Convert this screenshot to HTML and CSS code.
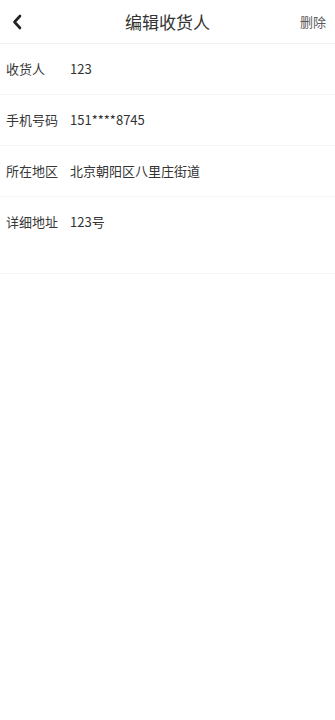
FILE: index.html
```html
<!DOCTYPE html>
<html lang="zh">
<head>
<meta charset="utf-8">
<link rel="stylesheet" href="styles.css">
</head>
<body>
<div class="page">
  <header class="nav">
    <div class="nav-left">
      <svg class="back" width="10" height="16" viewBox="0 0 10 16"><path d="M8 2 L2.5 8 L8 14" fill="none" stroke="#222" stroke-width="2.6" stroke-linecap="round" stroke-linejoin="round"/></svg>
    </div>
    <div class="nav-title">编辑收货人</div>
    <div class="nav-right">删除</div>
  </header>
  <div class="form">
    <div class="row"><span class="label">收货人</span><span class="value">123</span></div>
    <div class="row"><span class="label">手机号码</span><span class="value">151****8745</span></div>
    <div class="row"><span class="label">所在地区</span><span class="value">北京朝阳区八里庄街道</span></div>
    <div class="row row-tall"><span class="label">详细地址</span><span class="value">123号</span></div>
  </div>
</div>
</body>
</html>
```
FILE: styles.css
```css
* { box-sizing: border-box; }
html, body { margin: 0; padding: 0; background: #fff; }
body {
  font-family: "Noto Sans CJK SC", "Noto Sans", sans-serif;
  color: #333;
}
.page { width: 335px; min-height: 720px; background: #fff; }
.nav {
  height: 44px;
  display: grid;
  grid-template-columns: 1fr auto 1fr;
  align-items: center;
  border-bottom: 1px solid #f2f2f2;
}
.nav-left { display: flex; align-items: center; padding-left: 12px; }
.back { display: block; }
.nav-title { font-size: 17px; color: #333; line-height: 24px; }
.nav-right { justify-self: end; padding-right: 9px; font-size: 13px; color: #5a5a5a; line-height: 18px; }
.form { border-bottom: 1px solid #f4f4f4; }
.row {
  height: 51px;
  display: flex;
  align-items: center;
  padding-left: 6px;
  border-bottom: 1px solid #f4f4f4;
  font-size: 13px;
  line-height: 20px;
}
.row:last-child { border-bottom: none; }
.row-tall { height: 76px; align-items: flex-start; padding-top: 15px; }
.label { width: 64px; color: #383838; flex: none; }
.value { color: #333; }
```
